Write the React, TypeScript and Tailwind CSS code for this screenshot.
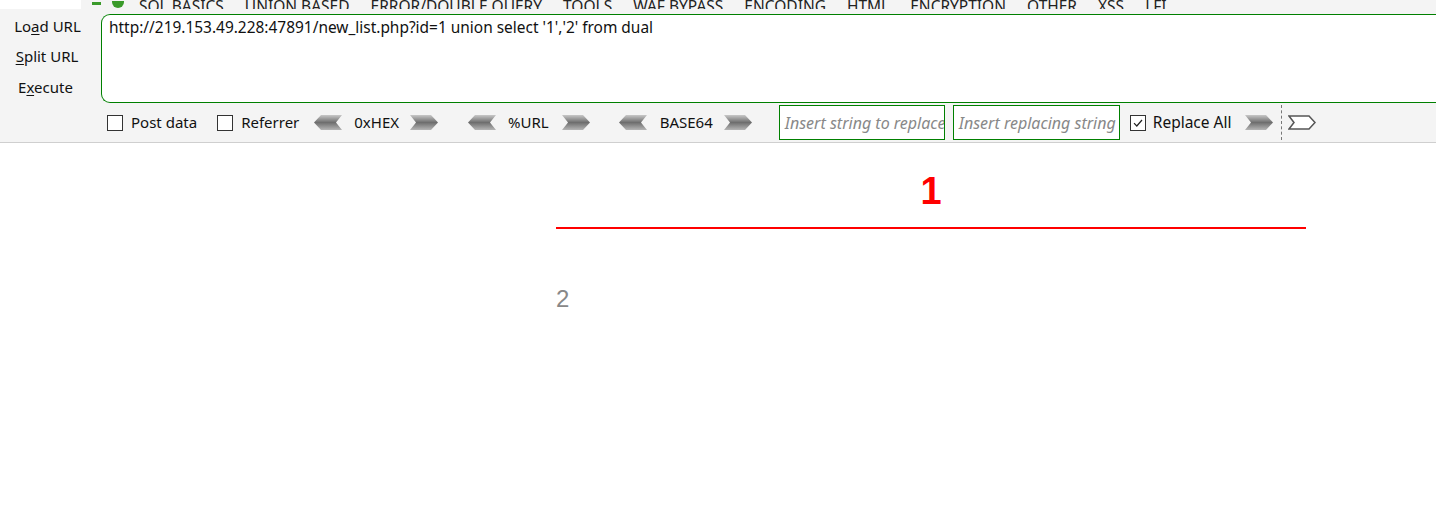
import React from "react";

const font = { fontFamily: '"Noto Sans", "Open Sans", sans-serif' };

function LeftArrow() {
  return (
    <svg width="28" height="15" viewBox="0 0 28 15">
      <defs>
        <linearGradient id="ga" x1="0" y1="0" x2="0" y2="1">
          <stop offset="0" stopColor="#c8c8c8" />
          <stop offset="0.5" stopColor="#6e6e6e" />
          <stop offset="1" stopColor="#b5b5b5" />
        </linearGradient>
      </defs>
      <polygon points="0,7.5 7,0 28,0 22,7.5 28,15 7,15" fill="url(#ga)" />
    </svg>
  );
}

function RightArrow({ outline = false }: { outline?: boolean }) {
  return (
    <svg width="28" height="15" viewBox="0 0 28 15">
      <defs>
        <linearGradient id="gb" x1="0" y1="0" x2="0" y2="1">
          <stop offset="0" stopColor="#c8c8c8" />
          <stop offset="0.5" stopColor="#6e6e6e" />
          <stop offset="1" stopColor="#b5b5b5" />
        </linearGradient>
      </defs>
      {outline ? (
        <polygon
          points="1,1 21,1 27,7.5 21,14 1,14 6,7.5"
          fill="#fff"
          stroke="#555"
          strokeWidth="1.5"
        />
      ) : (
        <polygon points="0,0 21,0 28,7.5 21,15 0,15 6,7.5" fill="url(#gb)" />
      )}
    </svg>
  );
}

function Box({ checked = false }: { checked?: boolean }) {
  return (
    <span className="w-4 h-4 border border-[#333] bg-white flex items-center justify-center shrink-0">
      {checked && (
        <svg width="12" height="12" viewBox="0 0 12 12">
          <path d="M2 6.2 L4.8 9 L10 3" fill="none" stroke="#222" strokeWidth="1.2" />
        </svg>
      )}
    </span>
  );
}

const menu = [
  "SQL BASICS",
  "UNION BASED",
  "ERROR/DOUBLE QUERY",
  "TOOLS",
  "WAF BYPASS",
  "ENCODING",
  "HTML",
  "ENCRYPTION",
  "OTHER",
  "XSS",
  "LFI",
];

export default function App() {
  return (
    <div className="w-[1436px] h-[507px] bg-white overflow-hidden text-[#111]" style={font}>
      {/* Toolbar */}
      <div className="bg-[#f4f4f4] border-b border-[#cfcfcf]">
        {/* Menu strip, cut off at the top */}
        <div className="h-[9px] overflow-hidden flex items-end">
          <div className="w-[81px] h-[9px] bg-white" />
          <div className="flex items-end h-[9px] ml-[11px] gap-[8px]">
            <span className="w-[9px] h-[3px] bg-[#3a9a2a] mb-[4px]" />
            <span className="w-[12px] h-[7px] bg-[#3a9a2a] rounded-b-full mb-[1px] ml-[3px]" />
          </div>
          <div className="flex gap-[21px] ml-[15px] text-[15.5px] leading-[20px] -mb-[7px] text-[#222] whitespace-nowrap">
            {menu.map((m) => (
              <span key={m}>{m}</span>
            ))}
          </div>
        </div>

        <div className="flex">
          {/* Left buttons */}
          <div className="w-[94px] flex flex-col items-center pt-[7px] text-[15px] leading-[20px] shrink-0">
            <span className="h-[30px] pl-[1px]">
              Lo<span className="underline underline-offset-2">a</span>d URL
            </span>
            <span className="h-[31px]">
              <span className="underline underline-offset-2">S</span>plit URL
            </span>
            <span className="-ml-[3px]">
              E<span className="underline underline-offset-2">x</span>ecute
            </span>
          </div>

          {/* URL box */}
          <div className="ml-[7px] mt-[5px] h-[89px] flex-1 bg-white border border-r-0 border-[#008000] rounded-l-[9px] px-[7px] pt-[2px] text-[15.45px] leading-[20px] whitespace-nowrap">
            http://219.153.49.228:47891/new_list.php?id=1 union select '1','2' from dual
          </div>
        </div>

        {/* Bottom row */}
        <div className="flex items-center h-[39px] pl-[107px] text-[15px]">
          <Box />
          <span className="ml-[8px]">Post data</span>
          <span className="ml-[20px]"><Box /></span>
          <span className="ml-[8px]">Referrer</span>
          <span className="ml-[15px]"><LeftArrow /></span>
          <span className="ml-[12px]">0xHEX</span>
          <span className="ml-[11px]"><RightArrow /></span>
          <span className="ml-[30px]"><LeftArrow /></span>
          <span className="ml-[12px]">%URL</span>
          <span className="ml-[13px]"><RightArrow /></span>
          <span className="ml-[29px]"><LeftArrow /></span>
          <span className="ml-[13px]">BASE64</span>
          <span className="ml-[11px]"><RightArrow /></span>
          <div className="ml-[27px] w-[166px] h-[35px] border border-[#008000] bg-white flex items-center pl-[5px] italic text-[16px] text-[#888] whitespace-nowrap overflow-hidden">
            Insert string to replace
          </div>
          <div className="ml-[8px] w-[167px] h-[35px] border border-[#008000] bg-white flex items-center pl-[5px] italic text-[16px] text-[#888] whitespace-nowrap overflow-hidden">
            Insert replacing string
          </div>
          <span className="ml-[10px]"><Box checked /></span>
          <span className="ml-[7px] text-[15.5px]">Replace All</span>
          <span className="ml-[14px]"><RightArrow /></span>
          <span className="ml-[8px] h-[35px] border-l border-dashed border-[#777]" />
          <span className="ml-[6px]"><RightArrow outline /></span>
        </div>
      </div>

      {/* Page body */}
      <div className="ml-[556px] w-[750px] pt-[26px]">
        <div
          className="text-center text-[38px] leading-[44px] font-bold text-[#ff0000]"
          style={{ fontFamily: '"Liberation Sans", Arial, sans-serif' }}
        >
          1
        </div>
        <div className="mt-[14px] h-[2px] bg-[#ff0000]" />
        <div
          className="mt-[56px] text-[24px] leading-[28px] text-[#888]"
          style={{ fontFamily: '"Liberation Sans", Arial, sans-serif' }}
        >
          2
        </div>
      </div>
    </div>
  );
}
